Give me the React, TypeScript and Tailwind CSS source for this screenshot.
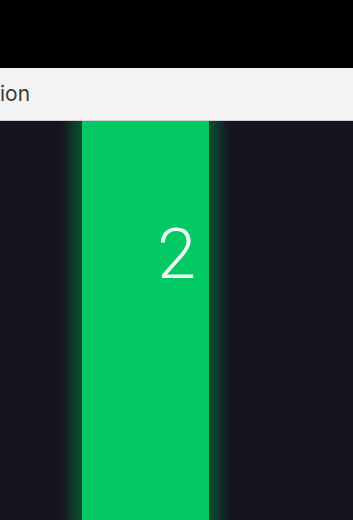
export default function App() {
  return (
    <div className="flex h-[520px] w-[353px] flex-col overflow-hidden bg-black font-['Roboto',sans-serif]">
      <div className="relative z-10 h-[68px] shrink-0 bg-black" />
      <div className="relative z-10 flex h-[53px] shrink-0 items-center border-b border-[#cfcfcf] bg-[#f3f3f4] pr-[2px]">
        <span className="mt-[-2px] text-[21px] leading-none text-[#3a3a3a] font-['Inter',sans-serif]">ion</span>
      </div>
      <div className="flex flex-1 bg-[#16141f]">
        <div className="w-[82px] shrink-0" />
        <div className="relative w-[127px] shrink-0 bg-[#02c964] shadow-[0_0_12px_12px_rgba(0,150,75,0.42)]">
          <div className="pr-[13px] pt-[98px] text-right text-[70px] font-light leading-none text-[#eefaf2]">
            2
          </div>
        </div>
      </div>
    </div>
  );
}
